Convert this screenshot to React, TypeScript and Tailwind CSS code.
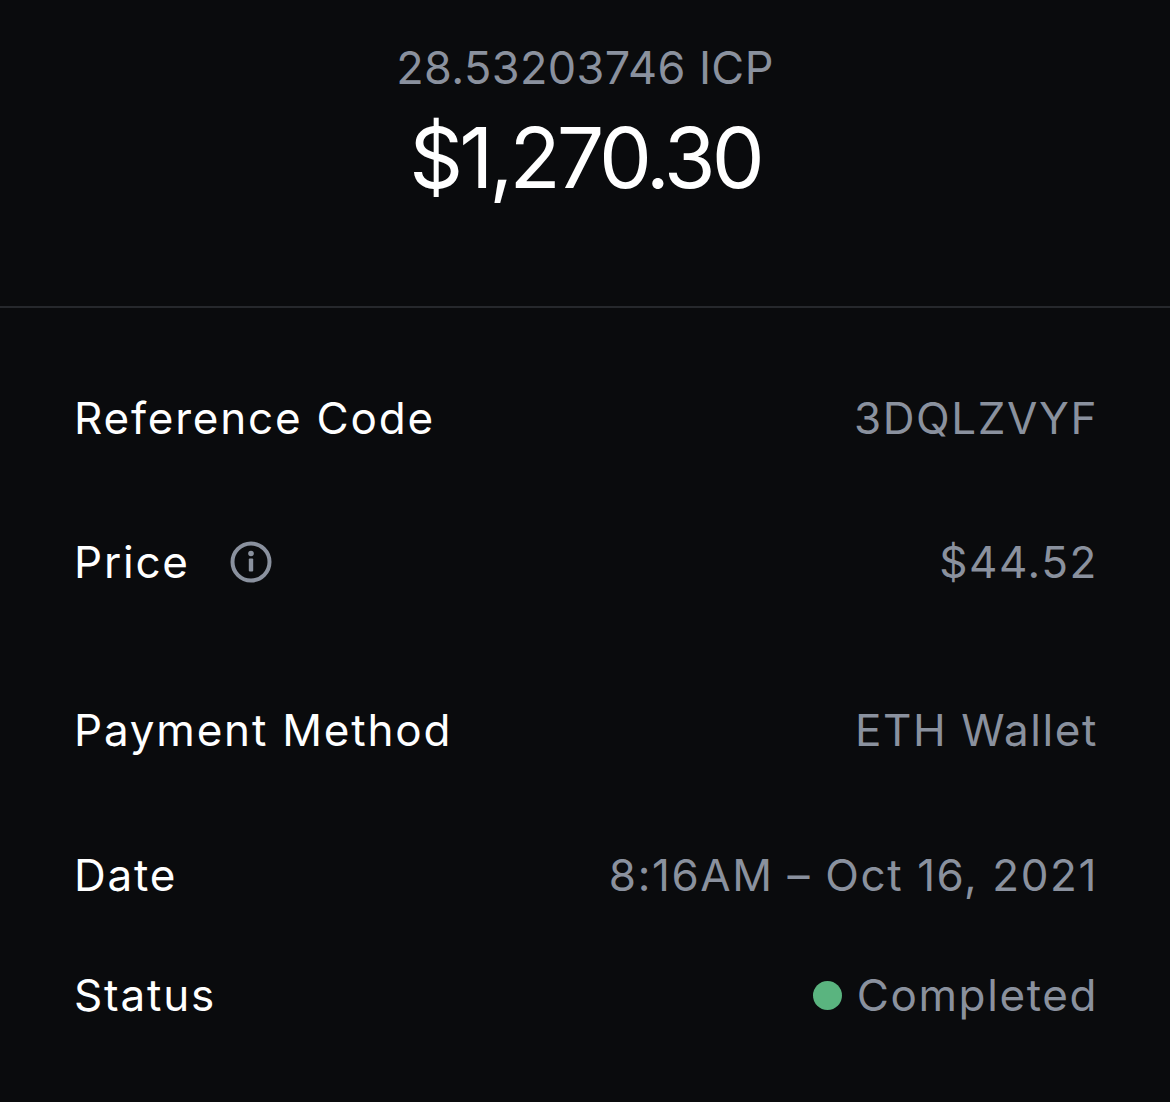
import React from "react";

type Row = {
  label: string;
  value: React.ReactNode;
  info?: boolean;
  gap: string;
};

const InfoIcon = () => (
  <svg width="42" height="42" viewBox="0 0 42 42" fill="none" className="ml-[40px]">
    <circle cx="21" cy="21" r="18.5" stroke="#8a919e" strokeWidth="4" />
    <circle cx="21" cy="12.5" r="2.8" fill="#8a919e" />
    <rect x="18.8" y="17.5" width="4.4" height="13" rx="1" fill="#8a919e" />
  </svg>
);

const rows: Row[] = [
  { label: "Reference Code", value: "3DQLZVYF", gap: "mt-0" },
  { label: "Price", value: "$44.52", info: true, gap: "mt-[44px]" },
  { label: "Payment Method", value: "ETH Wallet", gap: "mt-[68px]" },
  { label: "Date", value: "8:16AM – Oct 16, 2021", gap: "mt-[45px]" },
  {
    label: "Status",
    value: (
      <span className="flex items-center gap-[15px]">
        <span className="inline-block w-[29px] h-[29px] rounded-full bg-[#5ab47f]" />
        Completed
      </span>
    ),
    gap: "mt-[20px]",
  },
];

export default function App() {
  return (
    <div
      className="min-h-screen w-full bg-[#0a0b0d] text-white"
      style={{ fontFamily: "Inter, 'Noto Sans', sans-serif" }}
    >
      <div className="flex flex-col items-center pt-[40px] h-[306px]">
        <div className="text-[45px] leading-[56px] text-[#8a919e] tracking-[0.4px]">
          28.53203746 ICP
        </div>
        <div className="mt-[14px] text-[84px] leading-[96px] font-normal tracking-[-4px]">
          $1,270.30
        </div>
      </div>
      <div className="h-[2px] bg-[#26282c]" />
      <div className="px-[74px] pt-[60px]">
        {rows.map((r) => (
          <div
            key={r.label}
            className={`flex items-center justify-between h-[100px] ${r.gap}`}
          >
            <div className="flex items-center text-[44px] tracking-[1.8px]">
              {r.label}
              {r.info && <InfoIcon />}
            </div>
            <div className="text-[44px] tracking-[1.6px] text-[#8a919e] -mr-[2px]">
              {r.value}
            </div>
          </div>
        ))}
      </div>
    </div>
  );
}
